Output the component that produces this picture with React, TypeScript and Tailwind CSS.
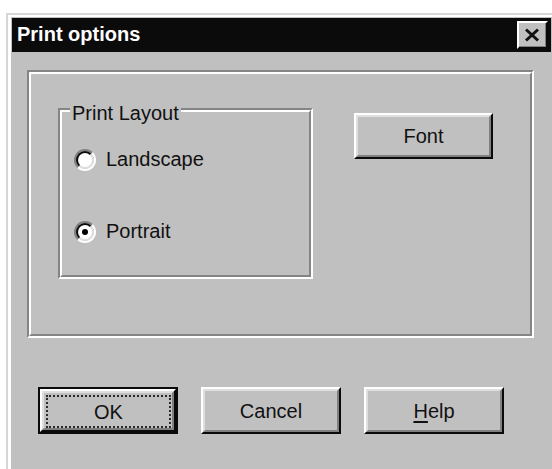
import React from "react";

const raised =
  "border-2 border-t-white border-l-white border-r-[#0a0a0a] border-b-[#0a0a0a]";
const raisedInner =
  "border-2 border-t-[#dfdfdf] border-l-[#dfdfdf] border-r-[#808080] border-b-[#808080]";
const etchedOuter =
  "border-2 border-t-[#858585] border-l-[#858585] border-r-white border-b-white";
const etchedInner =
  "border-2 border-t-white border-l-white border-r-[#858585] border-b-[#858585]";

function PushButton({
  children,
  width = "w-[140px]",
  height = "h-[47px]",
}: {
  children: React.ReactNode;
  width?: string;
  height?: string;
}) {
  return (
    <div className={`${width} ${height} ${raised} bg-[#c0c0c0]`}>
      <div
        className={`h-full ${raisedInner} flex items-center justify-center text-[20px] text-[#111] leading-none`}
      >
        {children}
      </div>
    </div>
  );
}

function DefaultButton({ children }: { children: React.ReactNode }) {
  return (
    <div className="w-[140px] h-[47px] border-2 border-[#0a0a0a] bg-[#c0c0c0]">
      <div className={`h-full ${raised}`}>
        <div className={`h-full ${raisedInner} pt-[2px] pl-[2px] pr-[1px]`}>
          <div className="h-full border-2 border-dotted border-[#2a2a2a] flex items-center justify-center text-[20px] text-[#111] leading-none">
            {children}
          </div>
        </div>
      </div>
    </div>
  );
}

function Radio({ label, checked }: { label: string; checked?: boolean }) {
  return (
    <div className="flex items-center h-[23px]">
      <div className="w-[22px] h-[22px] rounded-full border-2 border-t-[#808080] border-l-[#808080] border-r-white border-b-white">
        <div className="w-full h-full rounded-full border-2 border-t-[#0a0a0a] border-l-[#0a0a0a] border-r-[#dfdfdf] border-b-[#dfdfdf] bg-white flex items-center justify-center">
          {checked && <div className="w-[6px] h-[6px] rounded-full bg-black" />}
        </div>
      </div>
      <span className="ml-[10px] text-[20px] leading-[23px] text-[#111]">{label}</span>
    </div>
  );
}

export default function App() {
  return (
    <div className="min-h-screen bg-white font-['Liberation_Sans',Arial,sans-serif] overflow-hidden">
      <div className="ml-[6px] pt-[13px]">
        {/* window frame */}
        <div className="w-[546px] h-[456px] border-l-2 border-t-2 border-[#d6d6d6]">
          <div className="h-full border-l-[3px] border-t-2 border-white bg-[#c0c0c0] pl-px pt-px pr-px">
            {/* caption bar */}
            <div className="h-[34px] bg-[#0b0b0b] flex items-center justify-between pl-[5px] pr-[3px]">
              <span className="text-white font-bold text-[20px] leading-[23px] pb-[2px]">
                Print options
              </span>
              <div className={`w-[31px] h-[28px] ${raised} bg-[#c0c0c0]`}>
                <div className="h-full border-r border-b border-[#808080] flex items-center justify-center">
                  <svg width="16" height="14" viewBox="0 0 16 14">
                    <path
                      d="M2 1.5 L14 12.5 M14 1.5 L2 12.5"
                      stroke="#111"
                      strokeWidth="3"
                      fill="none"
                    />
                  </svg>
                </div>
              </div>
            </div>

            {/* options panel */}
            <div className={`ml-[15px] mt-[18px] w-[507px] h-[268px] ${etchedOuter}`}>
              <div className={`h-full ${etchedInner} flex items-start`}>
                <div className={`ml-[27px] mt-[34px] w-[255px] h-[171px] ${etchedOuter}`}>
                  <div className={`h-full ${etchedInner} pl-[12px]`}>
                    <div className="-mt-[10px] ml-[-4px] w-fit px-[2px] bg-[#c0c0c0] text-[20px] leading-[23px] text-[#111]">
                      Print Layout
                    </div>
                    <div className="mt-[23px]">
                      <Radio label="Landscape" />
                    </div>
                    <div className="mt-[49px]">
                      <Radio label="Portrait" checked />
                    </div>
                  </div>
                </div>
                <div className="ml-[41px] mt-[39px]">
                  <PushButton width="w-[139px]" height="h-[46px]">
                    Font
                  </PushButton>
                </div>
              </div>
            </div>

            {/* dialog buttons */}
            <div className="ml-[26px] mt-[49px] flex gap-[23px]">
              <DefaultButton>OK</DefaultButton>
              <PushButton>Cancel</PushButton>
              <PushButton>
                <span>
                  <span className="underline underline-offset-[3px]">H</span>elp
                </span>
              </PushButton>
            </div>
          </div>
        </div>
      </div>
    </div>
  );
}
